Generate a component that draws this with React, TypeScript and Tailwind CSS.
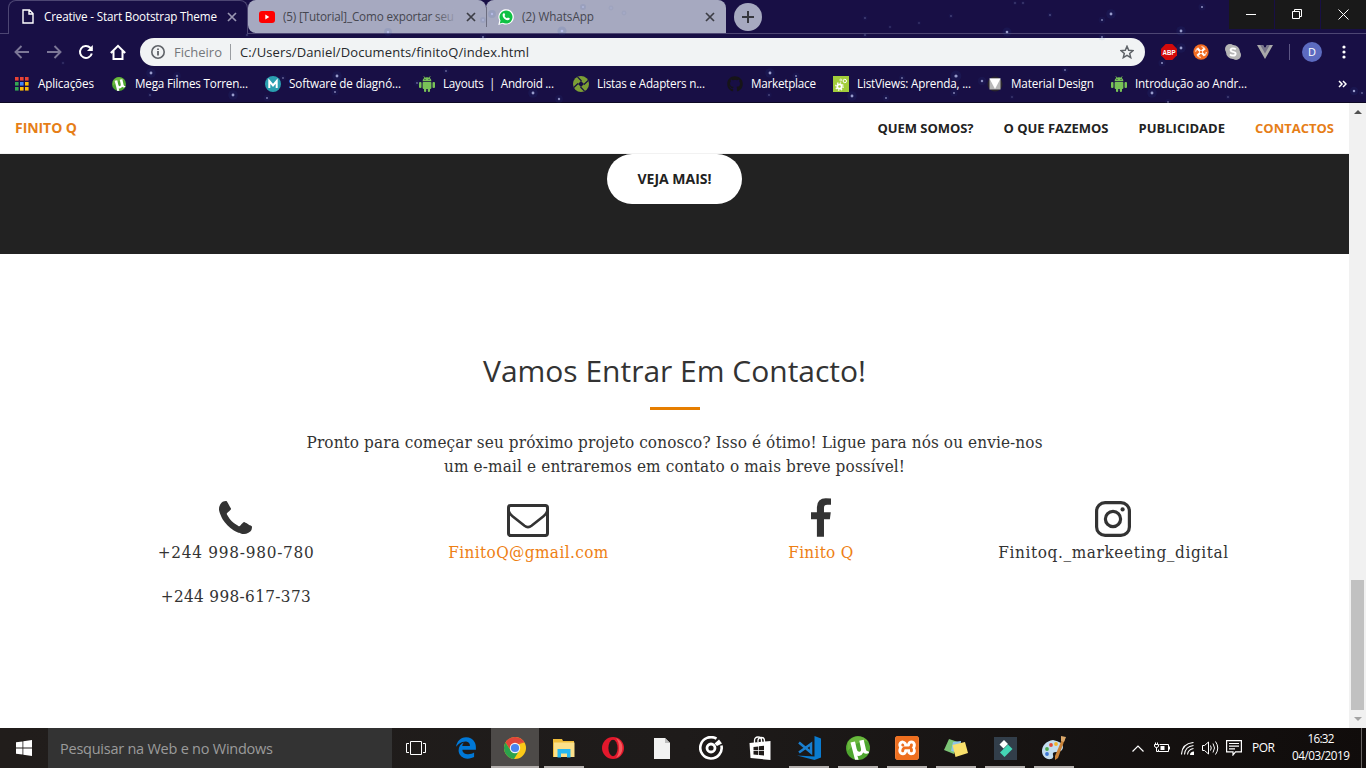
import React, { useLayoutEffect, useRef, useState } from "react";
import { FaGithub, FaEdgeLegacy } from "react-icons/fa";
import { SiXampp } from "react-icons/si";

/** Text run whose letter spacing is computed so that it spans a given width. */
function Fit({ w, children, className = "" }: { w: number; children: string; className?: string }) {
  const ref = useRef<HTMLSpanElement>(null);
  const [spacing, setSpacing] = useState(0);
  useLayoutEffect(() => {
    const el = ref.current;
    if (!el) return;
    el.style.letterSpacing = "0px";
    const natural = el.getBoundingClientRect().width;
    const next = (w - natural) / Math.max(1, children.length - 1);
    el.style.letterSpacing = `${next}px`;
    setSpacing(next);
  }, [w, children]);
  return (
    <span className={`inline-block whitespace-nowrap text-left ${className}`} style={{ width: w }}>
      <span ref={ref} className="inline-block" style={{ letterSpacing: spacing }}>
        {children}
      </span>
    </span>
  );
}

const STARS: [number, number, number, number][] = [
  [151, 73, 1.6, 0.8], [177, 76, 1.3, 0.6], [233, 95, 1.6, 0.8], [267, 98, 1.1, 0.6], [150, 95, 0.8, 0.5],
  [337, 76, 1.6, 0.8], [283, 78, 1, 0.5], [335, 92, 1.2, 0.6], [63, 63, 0.7, 0.4], [247, 35, 0.7, 0.5],
  [388, 32, 1.3, 0.8], [533, 93, 1.6, 0.8], [446, 71, 1, 0.5], [559, 99, 1.3, 0.7], [417, 83, 1, 0.5],
  [492, 14, 1.3, 0.8], [483, 20, 1, 0.6], [562, 31, 1.5, 0.9], [583, 7, 1, 0.7], [611, 8, 0.8, 0.4],
  [624, 13, 0.8, 0.4], [483, 37, 1.1, 0.6], [770, 73, 1.6, 0.8], [796, 76, 1.2, 0.6], [769, 95, 0.9, 0.5],
  [852, 96, 1.6, 0.8], [886, 98, 1.1, 0.6], [902, 78, 1, 0.6], [956, 76, 1.8, 0.8], [982, 81, 1.4, 0.7],
  [954, 93, 1.2, 0.6], [865, 18, 0.8, 0.5], [951, 16, 0.8, 0.5], [919, 23, 0.7, 0.4], [1007, 32, 1.5, 0.8],
  [1015, 3, 0.7, 0.5], [1023, 3, 0.7, 0.5], [1050, 15, 0.8, 0.6], [865, 35, 0.8, 0.5], [1065, 70, 1, 0.6],
  [1111, 14, 1.6, 0.8], [1102, 20, 1.1, 0.6], [1181, 31, 1.6, 0.8], [1202, 7, 1.2, 0.7], [1181, 48, 1.6, 0.8],
  [1162, 63, 1.2, 0.7], [1102, 37, 1.1, 0.6], [1152, 93, 1.6, 0.8], [1354, 91, 1.4, 0.8], [1362, 93, 1, 0.5],
  [1228, 97, 0.8, 0.5], [890, 27, 0.7, 0.4], [1012, 97, 0.8, 0.4], [1168, 102, 1, 0.5],
];

function Stars() {
  return (
    <svg className="pointer-events-none absolute left-0 top-0" width="1366" height="103">
      {STARS.map(([x, y, r, o], i) => (
        <g key={i} opacity={o}>
          <circle cx={x} cy={y} r={r * 3} fill="#2f55a8" opacity="0.14" />
          <circle cx={x} cy={y} r={r * 0.9} fill="#b9c0ee" />
        </g>
      ))}
    </svg>
  );
}

function Cross({ color }: { color: string }) {
  return (
    <svg width="10" height="10" viewBox="0 0 10 10" stroke={color} strokeWidth="1.7">
      <path d="M1 1l8 8M9 1l-8 8" />
    </svg>
  );
}

const Android = () => (
  <svg width="16" height="16" viewBox="0 0 16 16" fill="#78c257">
    <path d="M3.6 5.2a4.4 4 0 0 1 8.8 0z" />
    <path d="M4.8.3l1.2 2M11.2.3l-1.2 2" stroke="#78c257" strokeWidth=".8" />
    <rect x="3.6" y="5.9" width="8.8" height="7" rx=".8" />
    <rect x="0" y="6" width="2.5" height="6" rx="1" />
    <rect x="13.5" y="6" width="2.5" height="6" rx="1" />
    <rect x="5" y="11" width="2.2" height="5" rx="1" />
    <rect x="8.8" y="11" width="2.2" height="5" rx="1" />
    <circle cx="6" cy="3.5" r=".5" fill="#180f45" />
    <circle cx="10" cy="3.5" r=".5" fill="#180f45" />
  </svg>
);

const Apps = () => (
  <svg width="16" height="16" viewBox="0 0 16 16">
    {["#ea4335", "#ea4335", "#ea4335", "#34a853", "#4285f4", "#fbbc05", "#34a853", "#fbbc05", "#fbbc05"].map((c, i) => (
      <rect key={i} x={1 + (i % 3) * 5} y={1 + Math.floor(i / 3) * 5} width="3.6" height="3.6" fill={c} />
    ))}
  </svg>
);

const Mu = ({ size }: { size: number }) => (
  <svg width={size} height={size} viewBox="0 0 24 24">
    <circle cx="12" cy="12" r="12" fill="#4ea52f" />
    <path d="M1.5 7A12 12 0 0 1 22 5.500Q12 4 1.500 15z" fill="#76c043" opacity=".7" />
    <path d="M4.500 6.500l4.500-1 1.700 7.500q.6 3 2.700 2.700 2.200-.4 1.500-3.500L13.300 4.800l4.400-1 2.300 10q.5 1.800 2.500 1.500l.5 1.800q-3.500 1.800-5.700-.6-1.300 3-4.300 3.400l-1.600-.1 1.200 3.900-3.600.1z" fill="#fff" />
  </svg>
);

const Medium = () => (
  <svg width="16" height="16" viewBox="0 0 16 16">
    <circle cx="8" cy="8" r="8" fill="#2a9fb0" />
    <path d="M4.300 12V5L8 9.500 11.700 5v7" fill="none" stroke="#fff" strokeWidth="2" />
  </svg>
);

const Swirl = () => (
  <svg width="16" height="16" viewBox="0 0 16 16">
    <circle cx="8" cy="8" r="8" fill="#7c9f35" />
    <path d="M8 5L11 8 8 11 5 8z" fill="#180f45" />
    <path d="M4.500.800L8.500 5M15.200 4.500L11 8.500M11.500 15.200L7.500 11M.800 11.500L5 7.500" stroke="#180f45" strokeWidth="1.200" />
  </svg>
);

const Gears = () => (
  <svg width="16" height="16" viewBox="0 0 16 16">
    <rect width="16" height="16" fill="#a2cd3a" />
    <circle cx="6.500" cy="10.500" r="2.200" fill="none" stroke="#fff" strokeWidth="1.800" />
    <circle cx="6.500" cy="10.500" r="3.700" fill="none" stroke="#fff" strokeWidth="1.300" strokeDasharray="1.400 1.500" />
    <circle cx="11.800" cy="5" r="1.700" fill="none" stroke="#fff" strokeWidth="1" />
    <circle cx="7.800" cy="4" r="1" fill="none" stroke="#fff" strokeWidth=".7" />
  </svg>
);

const MaterialMark = () => (
  <svg width="16" height="16" viewBox="0 0 16 16">
    <circle cx="8" cy="8" r="7.500" fill="#29252c" />
    <rect x="2.500" y="2.500" width="11" height="11" fill="#b8b8b8" />
    <path d="M2.500 2.500h11L8 13z" fill="#fff" />
  </svg>
);

const BOOKMARKS = [
  { w: "w-[97px]", t: 56, label: "Aplicações", icon: <Apps /> },
  { w: "w-[154px]", t: 113, label: "Mega Filmes Torren...", icon: <Mu size={14} /> },
  { w: "w-[154px]", t: 112, label: "Software de diagnó...", icon: <Medium /> },
  { w: "w-[154px]", t: 111, label: "Layouts  |  Android ...", icon: <Android /> },
  { w: "w-[154px]", t: 108, label: "Listas e Adapters n...", icon: <Swirl /> },
  { w: "w-[106px]", t: 65, label: "Marketplace", icon: <FaGithub size={16} color="#161418" /> },
  { w: "w-[154px]", t: 114, label: "ListViews: Aprenda, ...", icon: <Gears /> },
  { w: "w-[124px]", t: 83, label: "Material Design", icon: <MaterialMark /> },
  { w: "w-[154px]", t: 112, label: "Introdução ao Andr...", icon: <Android /> },
];

function TabStrip() {
  return (
    <div className="flex h-[34px] items-start border-b border-[#4d4673]">
      <div className="ml-2 flex h-[34px] w-[240px] items-center rounded-t-lg border border-b-0 border-[#4d4673] bg-[#180f45] pb-[2px] pl-[13px]">
        <svg width="12" height="15" viewBox="0 0 12 15" fill="none" stroke="#fff" strokeWidth="1.400">
          <path d="M1 1h6.500L11 4.500V14H1zM7 1v4h4" />
        </svg>
        <Fit w={173} className="ml-[10px] text-[11.7px] text-white">Creative - Start Bootstrap Theme</Fit>
        <span className="ml-[10px]"><Cross color="#9a97b3" /></span>
      </div>
      <div className="flex h-[33px] w-[238px] items-center rounded-bl-lg rounded-tl-lg rounded-tr-lg bg-[#a6a9c0] pl-[11px]">
        <svg width="16" height="12" viewBox="0 0 16 12">
          <rect width="16" height="12" rx="3" fill="#f00" />
          <path d="M6.300 3.500v5l4-2.500z" fill="#fff" />
        </svg>
        <span className="relative ml-2 flex w-[175px] overflow-hidden">
          <Fit w={171} className="text-[11.7px] text-[#45464f]">(5) [Tutorial]_Como exportar seu</Fit>
          <span className="absolute inset-y-0 right-0 w-6 bg-gradient-to-r from-transparent to-[#a6a9c0]" />
        </span>
        <span className="ml-2"><Cross color="#3c3d45" /></span>
      </div>
      <div className="flex h-[33px] w-[240px] items-center rounded-tl-lg rounded-tr-lg bg-[#a6a9c0]">
        <div className="h-5 w-px bg-[#6c6d80]" />
        <svg width="16" height="16" viewBox="0 0 16 16" className="ml-[11px]">
          <path d="M.3 16l1-4.500A7.700 7.700 0 1 1 4.500 14.700z" fill="#fff" />
          <path d="M1.800 14.500l.7-3A6.500 6.500 0 1 1 4.800 13.700z" fill="#0fc144" />
          <path d="M5.500 4.200q.8-.4 1.200.6l.5 1.200-.7 1q.9 1.700 2.500 2.300l.9-.9 1.900.9q-.1 1.900-2 2Q6.700 11.300 4.800 7.500 4 5.200 5.500 4.200z" fill="#fff" />
        </svg>
        <Fit w={72} className="ml-2 text-[11.7px] text-[#45464f]">(2) WhatsApp</Fit>
        <span className="ml-[111px]"><Cross color="#3c3d45" /></span>
      </div>
      <div className="ml-2 mt-[3px] flex size-7 items-center justify-center rounded-full bg-[#a6a9c0]">
        <svg width="12" height="12" viewBox="0 0 12 12" stroke="#36373e" strokeWidth="2"><path d="M6 0v12M0 6h12" /></svg>
      </div>
      <div className="ml-auto flex gap-px">
        <div className="flex h-[29px] w-[45px] items-center justify-center bg-[#191919] pb-px pr-[2px]">
          <div className="h-px w-[10px] bg-white" />
        </div>
        <div className="flex h-[29px] w-[45px] items-center justify-center bg-[#191919] pb-px pr-[2px]">
          <svg width="10" height="10" viewBox="0 0 10 10" fill="none" stroke="#fff"><path d="M.5 2.500h7v7h-7zM2.500 2.500v-2h7v7h-2" /></svg>
        </div>
        <div className="flex h-[29px] w-[45px] items-center justify-center bg-[#191919] pb-px">
          <svg width="11" height="11" viewBox="0 0 11 11" stroke="#fff"><path d="M.5.500l10 10M10.500.500l-10 10" /></svg>
        </div>
      </div>
    </div>
  );
}

function Toolbar() {
  return (
    <div className="flex h-9 items-center pl-[14px]">
      <svg width="15" height="14" viewBox="0 0 15 14" fill="none" stroke="#7c7797" strokeWidth="1.900"><path d="M7.500 1L1.500 7l6 6M1.500 7H15" /></svg>
      <svg className="ml-[18px]" width="15" height="14" viewBox="0 0 15 14" fill="none" stroke="#7c7797" strokeWidth="1.900"><path d="M7.500 1l6 6-6 6M13.500 7H0" /></svg>
      <svg className="ml-[16px]" width="16" height="16" viewBox="0 0 16 16" fill="none" stroke="#fff" strokeWidth="2">
        <path d="M13.800 9.500A6 6 0 1 1 12.300 3.800L14 5.500" /><path d="M14.800 1v6H9z" fill="#fff" stroke="none" />
      </svg>
      <svg className="ml-[16px]" width="16" height="16" viewBox="0 0 16 16" fill="none" stroke="#fff" strokeWidth="2">
        <path d="M.8 9L8 1.800 15.200 9M3.500 7v8h9V7" />
      </svg>
      <div className="ml-[14px] flex h-7 w-[1005px] items-center rounded-full bg-[#f1f3f4] pl-[11px] pr-[11px]">
        <svg width="14" height="14" viewBox="0 0 14 14" fill="none" stroke="#5f6368" strokeWidth="1.600">
          <circle cx="7" cy="7" r="6.200" /><path d="M7 6v4.500M7 3.500v1.500" strokeWidth="1.800" />
        </svg>
        <Fit w={48} className="ml-[9px] pt-px text-[13px] text-[#74777b]">Ficheiro</Fit>
        <div className="ml-[8px] h-4 w-px bg-[#9a9da1]" />
        <Fit w={289} className="ml-[9px] pt-px text-[13px] text-[#26282b]">C:/Users/Daniel/Documents/finitoQ/index.html</Fit>
        <svg className="ml-auto" width="14" height="14" viewBox="0 0 14 14" fill="none" stroke="#5f6368" strokeWidth="1.500">
          <path d="M7 1.300l1.700 3.900 4.200.4-3.200 2.800 1 4.200L7 10.300l-3.700 2.300 1-4.200L1.100 5.600l4.200-.4z" />
        </svg>
      </div>
      <svg className="ml-[16px]" width="16" height="16" viewBox="0 0 16 16">
        <path d="M4.700 0h6.600L16 4.700v6.600L11.300 16H4.700L0 11.300V4.700z" fill="#d40a0a" />
        <text x="1.500" y="10.800" fontSize="7.500" fontWeight="700" fontFamily="Liberation Sans" fill="#fff" textLength="13" lengthAdjust="spacingAndGlyphs">ABP</text>
      </svg>
      <svg className="ml-[16px]" width="16" height="16" viewBox="0 0 16 16">
        <circle cx="8" cy="8" r="7.700" fill="#f26b21" />
        <path d="M4.500 4.500l7 7M11.500 4.500l-7 7" stroke="#fff" strokeWidth="2.200" />
        <circle cx="8" cy="8" r="1.200" fill="#f26b21" />
        <circle cx="8" cy="8" r="5.300" fill="none" stroke="#fff" strokeWidth="1" strokeDasharray="4.500 3.800" />
      </svg>
      <svg className="ml-[16px]" width="16" height="16" viewBox="0 0 16 16">
        <circle cx="5" cy="5" r="5" fill="#b5b5b5" /><circle cx="11" cy="11" r="5" fill="#b5b5b5" /><circle cx="8" cy="8" r="7" fill="#b5b5b5" />
        <path d="M10.800 5.400Q9.500 4.200 7.500 4.400 5.500 4.700 5.600 6.200 5.800 7.600 8 7.900q2.700.4 2.600 1.900-.2 1.700-2.600 1.700-2 0-3-1.200" fill="none" stroke="#fff" strokeWidth="1.900" />
      </svg>
      <svg className="ml-[16px]" width="16" height="14" viewBox="0 0 16 14">
        <path d="M0 0h6l2 3.500L10 0h6L8 14z" fill="#a9a9a9" /><path d="M3.200 0H6l2 3.500L10 0h2.800L8 8.400z" fill="#77748a" />
      </svg>
      <div className="ml-4 h-4 w-px bg-[#5c5684]" />
      <div className="ml-3 flex size-5 items-center justify-center rounded-full bg-[#5c6bc0] text-[11px] text-white">D</div>
      <svg className="ml-5" width="4" height="14" viewBox="0 0 4 14" fill="#fff"><circle cx="2" cy="2" r="1.600" /><circle cx="2" cy="7" r="1.600" /><circle cx="2" cy="12" r="1.600" /></svg>
    </div>
  );
}

function Bookmarks() {
  return (
    <div className="flex h-7 items-center pl-[14px]">
      {BOOKMARKS.map((b) => (
        <div key={b.label} className={`flex shrink-0 items-center ${b.w}`}>
          <span className="flex w-4 justify-center">{b.icon}</span>
          <Fit w={b.t} className="ml-2 whitespace-pre text-[11.7px] text-white">{b.label}</Fit>
        </div>
      ))}
      <svg className="ml-auto mr-[19px]" width="9" height="8" viewBox="0 0 9 8" fill="none" stroke="#fff" strokeWidth="1.500"><path d="M1 1l3 3-3 3M5 1l3 3-3 3" /></svg>
    </div>
  );
}

const PHONE =
  "M1408 1240q0 27-10 70.5t-20.5 68.5q-21 50-122 106-94 51-186 51-27 0-53-3.5t-57.5-12.5-47-14.5-55.5-20.5-49-18q-98-35-175-83-127-79-264-216t-216-264q-48-77-83-175-3-9-18-49t-20.5-55.5-14.5-47-12.5-57.5-3.5-53q0-92 51-186 56-101 106-122 25-10 68.5-20.5t70.5-10.5q14 0 21 3 18 6 53 76 11 19 30 54t35 63.5 31 53.5q3 4 17.5 25t21.5 35.5 7 28.5q0 20-28.500 50t-62 55-62 53-28.500 46q0 9 5 22.5t8.5 20.5 14 24 11.5 19q76 137 174 235t235 174q2 1 19 11.5t24 14 20.5 8.5 22.5 5q18 0 46-28.5t53-62 55-62 50-28.5q14 0 28.5 7t35.5 21.5 25 17.5q25 15 53.5 31t63.5 35 54 30q70 35 76 53 3 7 3 21z";

function Contact({ icon, children }: { icon: React.ReactNode; children: React.ReactNode }) {
  return (
    <div className="flex w-[292.5px] flex-col items-center">
      <div className="flex h-[42px] items-end justify-center">{icon}</div>
      {children}
    </div>
  );
}

const SERIF = "font-['DejaVu_Serif_Condensed','DejaVu_Serif',serif] text-[17px] leading-6";

function Page() {
  return (
    <div className="flex h-[625px]">
      <main className="flex w-[1349px] flex-col bg-white">
        <nav className="flex h-[51px] items-center border-b border-[#f2f2f2] pl-[15px] pr-[15px] font-bold text-[#222]">
          <Fit w={62} className="pb-[2px] text-[14px] text-[#e67e17]">FINITO Q</Fit>
          <div className="ml-auto flex gap-[30px] pt-[2px] text-[13px]">
            <Fit w={96}>QUEM SOMOS?</Fit>
            <Fit w={105}>O QUE FAZEMOS</Fit>
            <Fit w={86.5}>PUBLICIDADE</Fit>
            <Fit w={79} className="text-[#e67e17]">CONTACTOS</Fit>
          </div>
        </nav>
        <div className="flex h-[100px] justify-center bg-[#222]">
          <div className="flex h-[50px] w-[135px] items-center justify-center rounded-full bg-white pb-[2px] font-bold text-[#222]">
            <Fit w={74} className="text-[14px]">VEJA MAIS!</Fit>
          </div>
        </div>
        <section className="flex flex-col items-center pt-[100px] text-[#333]">
          <Fit w={383} className="text-[30px] leading-[33px]">Vamos Entrar Em Contacto!</Fit>
          <div className="mt-5 h-[3px] w-[50px] bg-[#e67e00]" />
          <div className={`mt-5 flex flex-col items-center ${SERIF}`}>
            <Fit w={736}>Pronto para começar seu próximo projeto conosco? Isso é ótimo! Ligue para nós ou envie-nos</Fit>
            <Fit w={461}>um e-mail e entraremos em contato o mais breve possível!</Fit>
          </div>
          <div className={`mt-[20px] flex w-[1170px] ${SERIF}`}>
            <Contact icon={<svg className="mb-[6px]" width="33" height="33" viewBox="0 128 1408 1408" fill="#333"><path d={PHONE} /></svg>}>
              <Fit w={156}>+244 998-980-780</Fit>
              <Fit w={150} className="mt-5">+244 998-617-373</Fit>
            </Contact>
            <Contact
              icon={
                <svg className="mb-[3px]" width="42" height="33" viewBox="0 0 42 33" fill="none" stroke="#333" strokeWidth="3">
                  <rect x="1.500" y="1.500" width="39" height="30" rx="2.200" />
                  <path d="M1.500 5q0 4 4 7.200L17.500 21.800q3.500 2.600 7 0l12-9.600q4-3.200 4-7.200" strokeWidth="2.600" />
                </svg>
              }
            >
              <Fit w={160} className="text-[#ee7f14]">FinitoQ@gmail.com</Fit>
            </Contact>
            <Contact
              icon={
                <svg className="mb-[3px]" width="20" height="39" viewBox="479 0 864 1664" fill="#333">
                  <path d="M1343 12v264h-157q-86 0-116 36t-30 108v189h293l-39 296h-254v759h-306v-759h-255v-296h255v-218q0-186 104-288.5t277-102.5q147 0 228 12z" />
                </svg>
              }
            >
              <Fit w={65} className="text-[#ee7f14]">Finito Q</Fit>
            </Contact>
            <Contact
              icon={
                <svg className="mb-[3px]" width="36" height="36" viewBox="0 0 36 36" fill="none" stroke="#333" strokeWidth="3.200">
                  <rect x="1.600" y="1.600" width="32.800" height="32.800" rx="8.500" />
                  <circle cx="18" cy="18" r="7.600" />
                  <circle cx="27.600" cy="8.400" r="2.100" fill="#333" stroke="none" />
                </svg>
              }
            >
              <Fit w={230}>Finitoq._markeeting_digital</Fit>
            </Contact>
          </div>
        </section>
      </main>
      <div className="flex w-[17px] flex-col items-center bg-[#f1f1f1]">
        <svg className="mt-[6px]" width="8" height="5" viewBox="0 0 8 5" fill="#505050"><path d="M0 5l4-4 4 4z" /></svg>
        <div className="mt-[466px] h-[130px] w-[13px] bg-[#c1c1c1]" />
        <svg className="mt-[7px]" width="8" height="5" viewBox="0 0 8 5" fill="#a3a3a3"><path d="M0 0l4 4 4-4z" /></svg>
      </div>
    </div>
  );
}

const TASKS: { open?: boolean; active?: boolean; icon: React.ReactNode }[] = [
  { icon: <svg className="mr-[2px]" width="20" height="14" viewBox="0 0 20 14" fill="none" stroke="#fff"><path d="M4.500.500h11v13h-11zM3 2.500H.500v9H3M17 2.500h2.500v9H17" /></svg> },
  { icon: <FaEdgeLegacy size={22} color="#0078d7" /> },
  {
    open: true, active: true,
    icon: (
      <svg width="22" height="22" viewBox="0 0 22 22">
        <circle cx="11" cy="11" r="11" fill="#fbc918" />
        <path d="M1.470 5.500A11 11 0 0 1 20.530 5.500L11 6 6.700 13.500z" fill="#e0453a" />
        <path d="M1.470 5.500A11 11 0 0 0 10 22l5.300-8.500L11 16l-4.300-2.500z" fill="#2ba24c" />
        <path d="M20.500 5.500H11V8z" fill="#e0453a" />
        <circle cx="11" cy="11" r="5.200" fill="#f4f4f4" /><circle cx="11" cy="11" r="4.100" fill="#4a84ee" />
      </svg>
    ),
  },
  {
    open: true,
    icon: (
      <svg width="22" height="19" viewBox="0 0 22 19">
        <path d="M0 0h9l1 2h11v16H0z" fill="#f0bd3a" /><path d="M1 3.500h20.500v14.500H1z" fill="#fbe08a" />
        <path d="M4.500 18.500v-8.500h13v8.500h-3.500v-4H8v4z" fill="#26b7f0" />
      </svg>
    ),
  },
  {
    icon: (
      <svg width="22" height="22" viewBox="0 0 22 22">
        <ellipse cx="11" cy="11" rx="11" ry="11" fill="#e3182c" />
        <path d="M14 1a11 11 0 0 1 0 20q3-4 3-10T14 1z" fill="#f4595c" />
        <ellipse cx="11" cy="11" rx="4.600" ry="8.300" fill="#1f1b19" />
      </svg>
    ),
  },
  { icon: <svg width="16" height="21" viewBox="0 0 16 21"><path d="M0 0h11l5 5v16H0z" fill="#f2f2f2" /><path d="M11 0v5h5z" fill="#bdbdbd" /></svg> },
  {
    icon: (
      <svg width="24" height="24" viewBox="0 0 24 24" fill="none" stroke="#fff">
        <path d="M17.500 2.700A10.700 10.700 0 1 0 22.400 9.500" strokeWidth="2.600" /><circle cx="12" cy="12" r="4" strokeWidth="2.800" />
        <path d="M15.500 7.500L20 3.500l3 4-5 2.500z" fill="#fff" stroke="none" />
      </svg>
    ),
  },
  {
    icon: (
      <svg width="22" height="24" viewBox="0 0 22 24">
        <path d="M5.500 8V4.500Q5.500 1 9 1T12.500 4.500V6M9 6V4q.5-2.500 3.500-2.500T15.500 5v1" fill="none" stroke="#fff" strokeWidth="1.300" />
        <path d="M.5 7L21.500 5v19L1.500 22z" fill="#fff" />
        <path d="M4.500 11l4.800-.6v3.900H4.500zM10 10.300l5-.6v4.600h-5zM4.500 15h4.800v4L4.500 18.500zM10 15h5v4.600l-5-.5z" fill="#1f1b19" />
      </svg>
    ),
  },
  {
    open: true,
    icon: (
      <svg width="24" height="24" viewBox="0 0 24 24">
        <path d="M17.500 0L24 2.500v19L17.500 24 0 19.500l17.500 1z" fill="#0a7bd0" />
        <path d="M2 6.500L14 16.500V8L2 16.500" fill="none" stroke="#1a7fd0" strokeWidth="2.500" />
      </svg>
    ),
  },
  { open: true, icon: <Mu size={24} /> },
  {
    open: true,
    icon: (
      <div className="flex size-6 items-center justify-center rounded-[4px] bg-white">
        <SiXampp size={24} color="#ee6f1f" />
      </div>
    ),
  },
  {
    open: true,
    icon: (
      <svg width="24" height="20" viewBox="0 0 24 20">
        <path d="M5 1l9 3-4 12-10-4z" fill="#7cc576" /><path d="M9 4l8-1-1 12-9-2z" fill="#8ec4e8" />
        <path d="M8.500 7L21 4l3 11-12.500 4z" fill="#f8e06c" />
      </svg>
    ),
  },
  {
    open: true,
    icon: (
      <svg width="23" height="23" viewBox="0 0 23 23">
        <rect width="23" height="23" fill="#323e4a" />
        <path d="M5.500 7.500L10 3l4 4-4.500 4.500z" fill="#fff" /><path d="M6 15.500l8-8 4.500 4.500-8 8z" fill="#44d7b6" />
      </svg>
    ),
  },
  {
    open: true,
    icon: (
      <svg width="24" height="24" viewBox="0 0 24 24">
        <path d="M11 4C4 5 0 10 0 15s4 9 9 8q3-1 2-4t3-3q7 0 7-5t-10-7z" fill="#c3ddf0" />
        <circle cx="5" cy="13" r="1.900" fill="#4aa84c" /><circle cx="9" cy="9" r="1.900" fill="#e04b3a" />
        <circle cx="14" cy="8" r="1.900" fill="#f3b52c" /><circle cx="5" cy="18" r="1.900" fill="#3d78d6" />
        <path d="M21 1l2 2-7 19-3 2v-4z" fill="#c98238" /><path d="M19 0l5 1-2 5-3-1z" fill="#d9a76a" />
      </svg>
    ),
  },
];

function Taskbar() {
  return (
    <footer className="flex h-10 bg-[#1f1b19] bg-gradient-to-r from-[#211d1b] via-[#1e1b1a] to-[#100c0b] text-white">
      <div className="flex w-12 items-center justify-center">
        <svg width="16" height="16" viewBox="0 0 16 16" fill="#fff"><path d="M0 2.300L6.500 1.400v6.200H0zM7.300 1.200L16 0v7.600H7.300zM0 8.400h6.500v6.200L0 13.700zM7.300 8.400H16V16l-8.700-1.200z" /></svg>
      </div>
      <div className="flex w-[344px] items-center bg-[#333] pl-3 pt-px text-[#9b9b9b]">
        <Fit w={213} className="text-[14.5px]">Pesquisar na Web e no Windows</Fit>
      </div>
      <div className="flex gap-px pl-px">
        {TASKS.map((t, i) => (
          <div key={i} className={`flex h-10 w-12 flex-col items-center ${t.active ? "bg-[#4d4a48]" : ""}`}>
            <div className="flex h-[38px] items-center justify-center pt-[2px]">{t.icon}</div>
            {t.open && <div className={`h-[2px] bg-[#b3afad] ${t.active ? "w-12" : "w-10"}`} />}
          </div>
        ))}
      </div>
      <div className="ml-auto flex items-center">
        <svg width="12" height="7" viewBox="0 0 12 7" fill="none" stroke="#fff" strokeWidth="1.200"><path d="M.5 6.500L6 1l5.500 5.500" /></svg>
        <svg className="ml-[10px]" width="16" height="12" viewBox="0 0 16 12" fill="none" stroke="#fff">
          <path d="M5.500 2.500h9v7h-10v-2M15.500 4.500v3" /><path d="M6.500 4h4v4h-4z" fill="#fff" stroke="none" /><path d="M.5 2.500h4v1.500q0 1.500-2 1.500T.5 4zM1.500.500v2M3.500.500v2M2.500 5.500v4h2" />
        </svg>
        <svg className="ml-[11px]" width="13" height="13" viewBox="0 0 13 13" fill="none" stroke="#fff" strokeWidth="1.100">
          <path d="M.5 12.500Q1 1.500 12.500.500M3.500 12.500Q4 4.500 12.500 3.500M6.500 12.500Q7 7.500 12.500 6.500" /><path d="M9 13q0-3.500 4-3.500V13z" fill="#fff" stroke="none" />
        </svg>
        <svg className="ml-[8px]" width="17" height="14" viewBox="0 0 17 14" fill="none" stroke="#fff">
          <path d="M.5 4.500h2L6.500 1v12l-4-3.500h-2zM8.500 4.500q1.500 2.500 0 5M11 2.500q3 4.500 0 9M13.500.500q4.500 6.500 0 13" />
        </svg>
        <svg className="ml-[7px]" width="16" height="16" viewBox="0 0 16 16" fill="none" stroke="#fff" strokeWidth="1.200">
          <path d="M.6.600h14.800v11.200H9.500L7 15v-3.200H.6zM3 3.500h10M3 6.200h10M3 8.900h6" />
        </svg>
        <Fit w={23} className="ml-[10px] text-[12px]">POR</Fit>
        <div className="ml-[17px] flex w-[58px] flex-col items-center pb-[2px] text-[11.7px] leading-[17px]">
          <Fit w={27}>16:32</Fit>
          <Fit w={58}>04/03/2019</Fit>
        </div>
        <div className="ml-[11px] mr-[4px] h-10 w-px bg-[#686462]" />
      </div>
    </footer>
  );
}

export default function App() {
  return (
    <div className="h-[768px] w-[1366px] overflow-hidden bg-white font-['Open_Sans','Noto_Sans',sans-serif]">
      <header className="relative h-[103px] border-b border-[#0d0824] bg-[#180f45]">
        <TabStrip />
        <Toolbar />
        <Bookmarks />
        <Stars />
      </header>
      <Page />
      <Taskbar />
    </div>
  );
}
